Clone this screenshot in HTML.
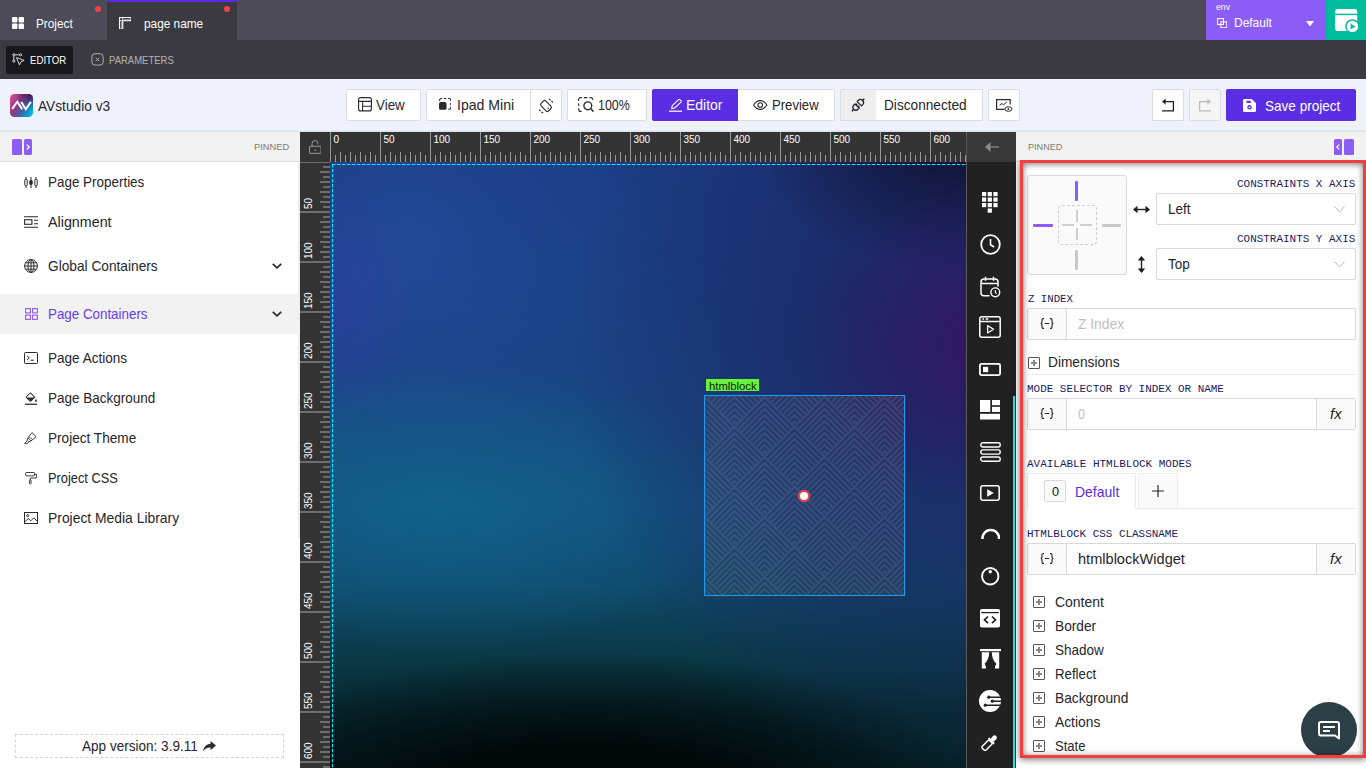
<!DOCTYPE html>
<html lang="en">
<head>
<meta charset="utf-8">
<title>AVstudio v3</title>
<style>
*{box-sizing:border-box;margin:0;padding:0}
html,body{width:1366px;height:768px;overflow:hidden;background:#fff;font-family:"Liberation Sans",sans-serif;color:#222}
.abs{position:absolute}
#app{position:relative;width:1366px;height:768px;overflow:hidden}
/* top bars */
#bar1{left:0;top:0;width:1366px;height:40px;background:#4d4b57}
#bar2{left:0;top:40px;width:1366px;height:39px;background:#3b3a40}
.tab{top:0;height:40px;color:#fff;font-size:13px;line-height:44px;white-space:nowrap}
.dot{width:6px;height:6px;border-radius:50%;background:#f5404a}
#toolbar{left:0;top:79px;width:1366px;height:53px;background:#f0f2fb;border-bottom:1px solid #dce1ec;box-shadow:inset 0 -1px 0 #e7ebf4}
.btn{top:90px;height:31px;background:#fff;border:1px solid #dcdde3;border-radius:2px;font-size:15px;line-height:29px;color:#26262b;white-space:nowrap}
.btn.p{background:#5a2be2;border-color:#5a2be2;color:#fff}
/* left panel */
#lhead{left:0;top:132px;width:300px;height:30px;background:#f2f2f2;border-bottom:1px solid #dedede}
.pinned{font-size:10px;color:#777;letter-spacing:.2px}
.mi{left:0;width:297px;height:40px;font-size:15px;color:#26262b;line-height:40px}
.mi span{position:absolute;left:48px;top:0;white-space:nowrap}
.mi svg{position:absolute}
/* right panel */
#rhead{left:1016px;top:132px;width:350px;height:30px;background:#f2f2f2;border-bottom:1px solid #dedede}
.lab{font-family:"Liberation Mono",monospace;font-size:10px;color:#1c1a5e;letter-spacing:.55px;white-space:nowrap;line-height:12px}
.inp{background:#fff;border:1px solid #d9d9d9;border-radius:2px;height:32px;font-size:15px;line-height:30px;color:#26262b}
.add{background:#fafafa;border:1px solid #d9d9d9;height:32px}
.sec{font-size:15px;color:#26262b;white-space:nowrap;line-height:18px}
.plus{width:12px;height:12px;border:1px solid #555;border-radius:1px;background:#fff}
.plus:before{content:"";position:absolute;left:2px;top:4px;width:6px;height:2px;background:#888}
.plus:after{content:"";position:absolute;left:4px;top:2px;width:2px;height:6px;background:#888}
</style>
</head>
<body>
<div id="app">
<div class="abs" id="bar1"></div>
<div class="abs" id="bar2"></div>
<!-- Project tab -->
<div class="abs tab" style="left:0;width:107px">
  <svg class="abs" style="left:12px;top:17px" width="12" height="12" viewBox="0 0 12 12"><rect x="0" y="0" width="5.4" height="5.4" rx="1" fill="#fff"/><rect x="6.6" y="0" width="5.4" height="5.4" rx="1" fill="#fff"/><rect x="0" y="6.6" width="5.4" height="5.4" rx="1" fill="#fff"/><rect x="6.6" y="6.6" width="5.4" height="5.4" rx="1" fill="#fff"/></svg>
  <div class="abs" style='left:36.4px;top:17px;font-size:12px;line-height:14px;color:#fff;white-space:nowrap;transform-origin:0 50%;transform:scaleX(0.9824);'>Project</div>
  <div class="abs dot" style="left:94.5px;top:5.5px"></div>
</div>
<!-- page name tab -->
<div class="abs tab" style="left:107px;width:130px;background:#3b3a40;border-top:2px solid #5a2be2;line-height:40px">
  <svg class="abs" style="left:11.800px;top:14.800px" width="12.500" height="12.500" viewBox="0 0 12.500 12.500" fill="none" stroke="#fff" stroke-width="1.100"><path d="M0.550 0.550h11.400v3.200H3.750v8.200H0.550z"/><path d="M3.750 0.550v3.200h-3.200M6 2v1.750M8 2v1.750M10 2v1.750M2 6h1.750M2 8h1.750M2 10h1.750" stroke-width="0.900"/></svg>
  <div class="abs" style='left:36.8px;top:15px;font-size:12px;line-height:14px;color:#fff;white-space:nowrap;transform-origin:0 50%;transform:scaleX(0.9859);'>page name</div>
  <div class="abs dot" style="left:117.4px;top:3.5px"></div>
</div>
<!-- env -->
<div class="abs" style="left:1206px;top:0;width:120px;height:40px;background:#8b5cf6"></div>
<div class="abs" style='left:1215.9px;top:1px;font-size:9.5px;line-height:11px;color:#fff;white-space:nowrap;transform-origin:0 50%;transform:scaleX(0.9134);'>env</div>
<svg class="abs" style="left:1217px;top:17.500px" width="10.300" height="10.300" viewBox="0 0 11 11" fill="none" stroke="#fff" stroke-width="1.100"><rect x="0.6" y="0.6" width="6.3" height="6.3"/><rect x="4.1" y="4.1" width="6.3" height="6.3"/></svg>
<div class="abs" style='left:1233.6px;top:16px;font-size:12px;line-height:14px;color:#fff;white-space:nowrap;transform-origin:0 50%;transform:scaleX(0.9965);'>Default</div>
<svg class="abs" style="left:1306px;top:20.500px" width="8" height="5.500" viewBox="0 0 8 5.500"><path d="M0 0h8L4 5.500z" fill="#fff"/></svg>
<div class="abs" style="left:1326px;top:0;width:40px;height:40px;background:#02bc9e"></div>
<svg class="abs" style="left:1335px;top:9px" width="25" height="25" viewBox="0 0 25 25"><rect x="0" y="0" width="22.200" height="22" rx="2.800" fill="#fff"/><path d="M0 5.400h22.200" stroke="#02bc9e" stroke-width="1.500"/><circle cx="17.400" cy="17.400" r="7.200" fill="#02bc9e"/><circle cx="17.400" cy="17.400" r="5.700" fill="#fff"/><path d="M15.600 14.400l4.800 3-4.800 3z" fill="#02bc9e"/></svg>
<!-- bar2 -->
<div class="abs" style="left:6px;top:46px;width:67px;height:28px;background:#19181c;border-radius:2px"></div>
<svg class="abs" style="left:11.800px;top:52.500px" width="13.500" height="13.500" viewBox="0 0 15 15" fill="none" stroke="#e8e8e8" stroke-width="1"><circle cx="2" cy="2" r="1.2"/><circle cx="9.5" cy="2" r="1.2"/><circle cx="2" cy="9" r="1.2"/><path d="M3.2 2h5.1M2 3.2v4.6"/><path d="M5 5l8.5 3.2-3.6 1.6-1.6 3.6z" fill="#19181c"/></svg>
<div class="abs" style='left:29.5px;top:54px;font-size:11px;line-height:13px;color:#fff;white-space:nowrap;transform-origin:0 50%;transform:scaleX(0.8753);'>EDITOR</div>
<svg class="abs" style="left:91px;top:53.200px" width="13" height="12.800" viewBox="0 0 14 14" fill="none" stroke="#b9b9bd" stroke-width="1"><rect x="0.8" y="0.8" width="12.4" height="12.4" rx="3.5"/><path d="M5 5l4 4M9 5l-4 4"/></svg>
<div class="abs" style='left:108.8px;top:54px;font-size:11px;line-height:13px;color:#b5b3b2;white-space:nowrap;transform-origin:0 50%;transform:scaleX(0.8642);'>PARAMETERS</div>
<div class="abs" id="toolbar"></div>
<!-- logo -->
<svg class="abs" style="left:10px;top:94px" width="23" height="23" viewBox="0 0 23 23"><defs><linearGradient id="lg" x1="0" y1="0.250" x2="1" y2="0.800"><stop offset="0" stop-color="#cc4a95"/><stop offset=".3" stop-color="#97387f"/><stop offset=".58" stop-color="#4c5d9c"/><stop offset=".8" stop-color="#1590c4"/><stop offset="1" stop-color="#00bde8"/></linearGradient><radialGradient id="rg" cx="0.950" cy="0" r="0.650"><stop offset="0" stop-color="#4a0f5c"/><stop offset="1" stop-color="#4a0f5c" stop-opacity="0"/></radialGradient></defs><rect width="23" height="23" rx="4.500" fill="url(#lg)"/><rect width="23" height="23" rx="4.500" fill="url(#rg)"/><path d="M2.200 14.800L7.300 7.700L12.200 15.200M11.300 7.900L15.800 15.200L20.900 7.900" fill="none" stroke="#fff" stroke-width="2" stroke-linejoin="miter"/></svg>
<div class="abs" style='left:38.3px;top:98px;font-size:14px;line-height:17px;color:#26262b;white-space:nowrap;transform-origin:0 50%;transform:scaleX(0.9787);'>AVstudio v3</div>
<!-- View -->
<div class="abs btn" style="left:346px;width:75px;top:89px;height:32px"></div>
<svg class="abs" style="left:358px;top:97px" width="14" height="15" viewBox="0 0 14 15" fill="none" stroke="#2b2b30" stroke-width="1.1"><rect x="0.6" y="0.6" width="12.8" height="13.3" rx="2"/><path d="M0.6 4.4h12.8M4.6 4.4v9.5M4.6 9.2h8.8"/></svg>
<div class="abs" style='left:376.2px;top:97px;font-size:14.5px;line-height:17px;color:#26262b;white-space:nowrap;transform-origin:0 50%;transform:scaleX(0.9207);'>View</div>
<!-- Ipad Mini -->
<div class="abs btn" style="left:426px;width:136px;top:89px;height:32px"></div>
<div class="abs" style="left:530px;top:90px;width:1px;height:30px;background:#dcdde3"></div>
<svg class="abs" style="left:438.600px;top:98.200px" width="12.300" height="11.800" viewBox="0 0 13 12.5" fill="none" stroke="#2b2b30" stroke-width="1.1"><path d="M0.6 3.2V2.2a1.6 1.6 0 0 1 1.6-1.6h1.2M5.2 0.6h2.6M9.6 0.6h1.2a1.6 1.6 0 0 1 1.6 1.6v1.2M12.4 5.2v2.4M12.4 9.2v1.1a1.6 1.6 0 0 1-1.6 1.6H9.8"/><rect x="0" y="4.3" width="8" height="8.2" rx="2" fill="#2b2b30" stroke="none"/></svg>
<div class="abs" style='left:457.1px;top:97px;font-size:14.5px;line-height:17px;color:#26262b;white-space:nowrap;transform-origin:0 50%;transform:scaleX(0.9704);'>Ipad Mini</div>
<svg class="abs" style="left:538px;top:97.500px" width="16" height="16" viewBox="0 0 16 16" fill="none" stroke="#2b2b30" stroke-width="1.150"><rect x="4.600" y="2.700" width="6.800" height="10.600" rx="1.800" transform="rotate(-45 8 8)"/><circle cx="10.300" cy="10.300" r="0.750" fill="#2b2b30" stroke="none"/><path d="M10.800 1A7.400 7.400 0 0 1 15 5.200M5.200 15A7.400 7.400 0 0 1 1 10.800" stroke-dasharray="2 1.300"/></svg>
<!-- 100% -->
<div class="abs btn" style="left:567px;width:80px;top:89px;height:32px"></div>
<svg class="abs" style="left:577.5px;top:96.5px" width="16.5" height="15.5" viewBox="0 0 16.5 15.5" fill="none" stroke="#2b2b30" stroke-width="1.2"><path d="M0.7 4V2.6a2 2 0 0 1 2-2h1.2M6 0.6h3.4M11.4 0.6h1.4a2 2 0 0 1 2 2V3M0.7 6.2v3M0.7 11.2v1.2a2 2 0 0 0 2 2H3.6" stroke-width="1.1"/><circle cx="9.8" cy="8.8" r="3.9" stroke-width="1.4"/><path d="M12.7 11.8l2.8 2.8" stroke-width="1.5"/></svg>
<div class="abs" style='left:598.3px;top:97px;font-size:14.5px;line-height:17px;color:#26262b;white-space:nowrap;transform-origin:0 50%;transform:scaleX(0.8573);'>100%</div>
<!-- Editor / Preview -->
<div class="abs btn" style="left:737px;width:98px;top:89px;height:32px;border-left:none;border-radius:0 2px 2px 0"></div>
<div class="abs" style="left:652px;top:89px;width:86px;height:32px;background:#5b2ee5;border-radius:2px 0 0 2px"></div>
<svg class="abs" style="left:668.5px;top:99px" width="13.5" height="13" viewBox="0 0 13.5 13" fill="none" stroke="#fff" stroke-width="1.1"><path d="M0 12.2h13.2" stroke-width="1.2"/><path d="M2.6 9.6l0.7-3L9.6 0.7a0.9 0.9 0 0 1 1.2 0l1.2 1.2a0.9 0.9 0 0 1 0 1.2L5.7 9z" stroke-linejoin="round"/></svg>
<div class="abs" style='left:686.1px;top:97px;font-size:14.5px;line-height:17px;color:#fff;white-space:nowrap;transform-origin:0 50%;transform:scaleX(0.9607);'>Editor</div>
<svg class="abs" style="left:753px;top:100px" width="14.5" height="10" viewBox="0 0 14.5 10" fill="none" stroke="#2b2b30" stroke-width="1.1"><path d="M0.6 5C2.2 2.2 4.5 0.6 7.25 0.6S12.3 2.2 13.9 5C12.3 7.8 10 9.4 7.25 9.4S2.2 7.8 0.6 5z"/><circle cx="7.25" cy="5" r="2.3"/></svg>
<div class="abs" style='left:771.8px;top:97px;font-size:14.5px;line-height:17px;color:#26262b;white-space:nowrap;transform-origin:0 50%;transform:scaleX(0.9035);'>Preview</div>
<!-- Disconnected -->
<div class="abs btn" style="left:840px;width:143px;top:89px;height:32px"></div>
<div class="abs" style="left:841px;top:90px;width:35px;height:30px;background:#eeeeee"></div>
<svg class="abs" style="left:851px;top:98px" width="14" height="14" viewBox="0 0 14 14" fill="none" stroke="#1e1e22" stroke-width="1.250"><g transform="translate(7.100 7) rotate(-45)"><path d="M-1.400 -2.900H-3.200A2.900 2.900 0 0 0 -3.200 2.900H-1.400z"/><path d="M-1.400 -1.400H0.200M-1.400 1.400H0.200M-6.100 0H-8.800" stroke-width="1.400"/><path d="M1.700 -3.100H3.200A3.100 3.100 0 0 1 3.200 3.100H1.700z"/><path d="M6.300 0H8.800" stroke-width="1.400"/></g></svg>
<div class="abs" style='left:884.2px;top:97px;font-size:14.5px;line-height:17px;color:#26262b;white-space:nowrap;transform-origin:0 50%;transform:scaleX(0.9413);'>Disconnected</div>
<div class="abs btn" style="left:988px;width:32px;top:89px;height:32px"></div>
<svg class="abs" style="left:996px;top:98.5px" width="17" height="13" viewBox="0 0 17 13" fill="none" stroke="#2b2b30" stroke-width="1.2"><path d="M8.5 10.4H0.6V0.6h13.6v5"/><path d="M3.6 6.2l2.4-1.6 1.6 1.2 3.2-2.8" stroke-width="1"/><ellipse cx="12.4" cy="10" rx="3.6" ry="2.3" stroke-width="1"/><circle cx="12.4" cy="10" r="0.9" fill="#2b2b30" stroke="none"/></svg>
<!-- undo / redo / save -->
<div class="abs btn" style="left:1152px;width:32px;top:89px;height:32px"></div>
<svg class="abs" style="left:1161px;top:98px" width="14" height="14" viewBox="0 0 14 14" fill="none" stroke="#1e1e22" stroke-width="1.3"><path d="M1.4 3.6h11v9.2H1"/><path d="M4.6 0.4L1.4 3.6l3.2 3.2" fill="#1e1e22" stroke="none"/></svg>
<div class="abs btn" style="left:1189px;width:32px;top:89px;height:32px;background:#f5f5f5"></div>
<svg class="abs" style="left:1198px;top:98px" width="14" height="14" viewBox="0 0 14 14" fill="none" stroke="#bcbcbc" stroke-width="1.3"><path d="M12.6 3.6h-11v9.2H13"/><path d="M9.4 0.4l3.2 3.2-3.2 3.2" fill="#bcbcbc" stroke="none"/></svg>
<div class="abs" style="left:1226px;top:89px;width:130px;height:32px;background:#5b2ee5;border-radius:2px"></div>
<svg class="abs" style="left:1242.5px;top:98.5px" width="13" height="13" viewBox="0 0 13 13"><path d="M1.5 0h7.3L13 4.2v7.3a1.5 1.5 0 0 1-1.5 1.5h-10A1.5 1.5 0 0 1 0 11.500V1.5A1.500 1.500 0 0 1 1.500 0z" fill="#fff"/><rect x="3.500" y="1.800" width="4.300" height="2.200" fill="#5b2ee5"/><circle cx="6.500" cy="8.300" r="2.200" fill="#5b2ee5"/><circle cx="6.500" cy="8.300" r="0.900" fill="#fff"/></svg>
<div class="abs" style='left:1264.9px;top:98px;font-size:14.5px;line-height:17px;color:#fff;white-space:nowrap;transform-origin:0 50%;transform:scaleX(0.9341);'>Save project</div>
<div class="abs" id="lhead"></div>
<div class="abs" style="left:0;top:162px;width:300px;height:606px;background:#fff"></div>
<div class="abs" style="left:298px;top:162px;width:2px;height:376px;background:#ededf1"></div>
<svg class="abs" style="left:12px;top:139px" width="20" height="16" viewBox="0 0 20 16"><rect x="0" y="0" width="10" height="16" rx="1.5" fill="#8b5cf6"/><rect x="12" y="0" width="8" height="16" rx="1.5" fill="#8b5cf6"/><path d="M14.8 5.6l2.4 2.400-2.400 2.400" fill="none" stroke="#fff" stroke-width="1.300"/></svg>
<div class="abs" style='left:254.1px;top:141px;font-size:9.5px;line-height:11px;color:#7c7c7c;white-space:nowrap;transform-origin:0 50%;transform:scaleX(0.9775);'>PINNED</div>
<!-- menu -->
<div class="abs" style="left:0;top:294px;width:299px;height:40px;background:#f2f2f2"></div>
<svg class="abs" style="left:24px;top:177px" width="14" height="11" viewBox="0 0 14 11" fill="none" stroke="#2b2b30" stroke-width="1"><path d="M2 0v2.500M2 8.500v2.500M7 0v3.500M7 7.500v3.500M12 0v2.500M12 8.500v2.500"/><rect x="0.800" y="2.500" width="2.400" height="6" rx="0.600"/><rect x="5.800" y="3.500" width="2.400" height="4" rx="0.600" fill="#2b2b30"/><rect x="10.800" y="2.500" width="2.400" height="6" rx="0.600"/></svg>
<div class="abs" style='left:48.2px;top:174px;font-size:14.5px;line-height:17px;color:#26262b;white-space:nowrap;transform-origin:0 50%;transform:scaleX(0.9261);'>Page Properties</div>
<svg class="abs" style="left:24px;top:216px" width="14" height="12" viewBox="0 0 14 12" fill="none" stroke="#2b2b30" stroke-width="1.100"><path d="M0 0.800h14M0 11.200h14M10 4.200h4M10 7.800h4"/><rect x="0.600" y="3.700" width="7.300" height="4.600"/></svg>
<div class="abs" style='left:48.2px;top:214px;font-size:14.5px;line-height:17px;color:#26262b;white-space:nowrap;transform-origin:0 50%;transform:scaleX(0.9863);'>Alignment</div>
<svg class="abs" style="left:24px;top:259px" width="14" height="14" viewBox="0 0 14 14" fill="none" stroke="#2b2b30" stroke-width="1"><circle cx="7" cy="7" r="6.400"/><ellipse cx="7" cy="7" rx="3" ry="6.400"/><path d="M7 0.600v12.800M0.600 7h12.800M1.500 3.800h11M1.500 10.200h11"/></svg>
<div class="abs" style='left:48.2px;top:258px;font-size:14.5px;line-height:17px;color:#26262b;white-space:nowrap;transform-origin:0 50%;transform:scaleX(0.9451);'>Global Containers</div>
<svg class="abs" style="left:272px;top:262.500px" width="10" height="6" viewBox="0 0 10 6" fill="none" stroke="#2b2b30" stroke-width="1.800"><path d="M0.800 0.800l4.200 4 4.200-4"/></svg>
<svg class="abs" style="left:25px;top:308px" width="13" height="12" viewBox="0 0 13 12" fill="none" stroke="#8b5cf6" stroke-width="1.100"><rect x="0.600" y="0.600" width="4.800" height="4.300"/><rect x="7.600" y="0.600" width="4.800" height="4.300"/><rect x="0.600" y="7.100" width="4.800" height="4.300"/><rect x="7.600" y="7.100" width="4.800" height="4.300"/></svg>
<div class="abs" style='left:48.2px;top:306px;font-size:14.5px;line-height:17px;color:#6a3de8;white-space:nowrap;transform-origin:0 50%;transform:scaleX(0.9212);'>Page Containers</div>
<svg class="abs" style="left:272px;top:310.500px" width="10" height="6" viewBox="0 0 10 6" fill="none" stroke="#2b2b30" stroke-width="1.800"><path d="M0.800 0.800l4.200 4 4.200-4"/></svg>
<svg class="abs" style="left:24px;top:352px" width="14" height="12" viewBox="0 0 14 12" fill="none" stroke="#2b2b30" stroke-width="1"><rect x="0.500" y="0.500" width="13" height="11" rx="0.800"/><path d="M3 3.800l2.400 2-2.400 2M6.500 8.200h3.500"/></svg>
<div class="abs" style='left:48.2px;top:350px;font-size:14.5px;line-height:17px;color:#26262b;white-space:nowrap;transform-origin:0 50%;transform:scaleX(0.9344);'>Page Actions</div>
<svg class="abs" style="left:24.500px;top:391.500px" width="12.800" height="13" viewBox="0 0 14 14"><path d="M5.600 0.600l5 5-4 4a1 1 0 0 1-1.400 0l-3.400-3.400a1 1 0 0 1 0-1.400l3.400-3.400" fill="none" stroke="#2b2b30" stroke-width="1.100"/><path d="M1.700 6h8.600l-4.200 3.800z" fill="#2b2b30"/><path d="M12 7.600c0.700 1 1 1.500 1 2a1 1 0 0 1-2 0c0-0.500 0.300-1 1-2z" fill="#2b2b30"/><path d="M0 13.300h14" stroke="#2b2b30" stroke-width="1.400"/></svg>
<div class="abs" style='left:48.2px;top:390px;font-size:14.5px;line-height:17px;color:#26262b;white-space:nowrap;transform-origin:0 50%;transform:scaleX(0.9299);'>Page Background</div>
<svg class="abs" style="left:24.200px;top:432px" width="13" height="12.500" viewBox="0 0 14 14" fill="none" stroke="#2b2b30" stroke-width="1"><path d="M8.600 0.700l4.700 4.700-5.800 4.600-3.400-3.400z"/><path d="M5.600 5.200l3.300 3.300M4.100 6.600l-1 2.800 1.500 1.500 2.900-0.900M3.400 9.800l-3 3h3.400l1.200-1.400"/></svg>
<div class="abs" style='left:48.2px;top:430px;font-size:14.5px;line-height:17px;color:#26262b;white-space:nowrap;transform-origin:0 50%;transform:scaleX(0.9380);'>Project Theme</div>
<svg class="abs" style="left:24.500px;top:472.300px" width="12.200" height="12.600" viewBox="0 0 14 15" fill="none" stroke="#2b2b30" stroke-width="1.100"><rect x="0.600" y="0.600" width="10.400" height="4" rx="0.800"/><path d="M11 2.600h2.300v4.600H6v2.300"/><rect x="5" y="9.500" width="2" height="4.800" rx="0.800"/></svg>
<div class="abs" style='left:48.2px;top:470px;font-size:14.5px;line-height:17px;color:#26262b;white-space:nowrap;transform-origin:0 50%;transform:scaleX(0.8850);'>Project CSS</div>
<svg class="abs" style="left:24px;top:512px" width="14" height="12" viewBox="0 0 14 12" fill="none" stroke="#2b2b30" stroke-width="1"><rect x="0.500" y="0.500" width="13" height="11"/><circle cx="3.700" cy="3.600" r="1" /><path d="M0.500 10l3.800-3.500 2.500 2.300 3-3 3.700 3.700"/></svg>
<div class="abs" style='left:48.2px;top:510px;font-size:14.5px;line-height:17px;color:#26262b;white-space:nowrap;transform-origin:0 50%;transform:scaleX(0.9569);'>Project Media Library</div>
<!-- app version -->
<div class="abs" style="left:15px;top:734px;width:269px;height:24px;border:1px dashed #d4d4d4"></div>
<div class="abs" style='left:82.1px;top:738px;font-size:14.5px;line-height:17px;color:#26262b;white-space:nowrap;transform-origin:0 50%;transform:scaleX(0.9348);'>App version: 3.9.11</div>
<svg class="abs" style="left:203px;top:740.500px" width="13" height="11" viewBox="0 0 13 11"><path d="M7.600 0l5.400 4.600-5.400 4.600V6.500C3.800 6.500 1.600 7.800 0 10.600 0.500 6.200 3 3.200 7.600 2.700z" fill="#2b2b30"/></svg>
<div class="abs" id="canvas" style="left:330px;top:162px;width:636px;height:606px;overflow:hidden;background:radial-gradient(ellipse 30% 26% at 104% 30%, rgba(52,22,100,.9) 0%, rgba(52,22,100,0) 100%),radial-gradient(ellipse 34% 22% at 100% -4%, rgba(16,14,44,.95) 0%, rgba(16,14,44,0) 100%),radial-gradient(ellipse 62% 72% at 100% 30%, rgba(28,32,92,.9) 0%, rgba(28,34,96,.62) 45%, rgba(28,36,100,0) 100%),radial-gradient(ellipse 68% 27% at 40% 108%, rgba(1,6,7,1) 0%, rgba(1,6,7,.9) 45%, rgba(1,6,7,0) 100%),radial-gradient(ellipse 48% 24% at 17% 57%, rgba(16,100,140,.85) 0%, rgba(16,100,140,0) 100%),radial-gradient(ellipse 14% 20% at 0% 24%, rgba(50,60,165,.5) 0%, rgba(50,60,165,0) 100%),radial-gradient(ellipse 40% 35% at 12% 14%, rgba(36,74,156,.8) 0%, rgba(36,74,156,0) 100%),linear-gradient(to bottom, #1b3d82 0%, #1a4582 35%, #164e7e 56%, #10496a 70%, #0a3a48 81%, #062a30 91%, #052429 100%)"></div>
<svg class="abs" style="left:330px;top:162px" width="637" height="606" viewBox="0 0 637 606" fill="none" stroke="#00eeff" stroke-width="1" stroke-dasharray="3.400 1.600"><path d="M2 2.500H637M2.500 2V606"/></svg>
<svg class="abs" style="left:703.6px;top:395px" width="201" height="201" viewBox="0 0 201 201"><defs><clipPath id="dm"><path d="M30 0L60 30 30 60 0 30z"/></clipPath><g id="chev" clip-path="url(#dm)" fill="none" stroke="#fff" stroke-opacity=".125" stroke-width="2.100">
<path d="M-10 41.5L30 1.5L70 41.5"/>
<path d="M-10 47.5L30 7.5L70 47.5"/>
<path d="M-10 53.5L30 13.5L70 53.5"/>
<path d="M-10 59.5L30 19.5L70 59.5"/>
<path d="M-10 65.5L30 25.5L70 65.5"/>
<path d="M-10 71.5L30 31.5L70 71.5"/>
<path d="M-10 77.5L30 37.5L70 77.5"/>
<path d="M-10 83.5L30 43.5L70 83.5"/>
<path d="M-10 89.5L30 49.5L70 89.5"/>
<path d="M-10 95.5L30 55.5L70 95.5"/>
<path d="M-10 101.5L30 61.5L70 101.5"/>
</g><pattern id="pt" width="60" height="60" patternUnits="userSpaceOnUse" x="30.500" y="0.500"><use href="#chev"/><use href="#chev" x="-30" y="-30"/><use href="#chev" x="30" y="-30"/><use href="#chev" x="-30" y="30"/><use href="#chev" x="30" y="30"/></pattern></defs><rect x="0.500" y="0.500" width="200" height="200" fill="rgba(70,70,90,.16)"/><rect x="0.500" y="0.500" width="200" height="200" fill="url(#pt)" stroke="#1b9df0" stroke-width="1"/></svg>
<div class="abs" style="left:706px;top:379px;width:53px;height:12px;background:#68f23a"></div>
<div class="abs" style='left:708.7px;top:380px;font-size:10.5px;line-height:13px;color:#0a1a05;white-space:nowrap;transform-origin:0 50%;transform:scaleX(1.0731);'>htmlblock</div>
<div class="abs" style="left:798px;top:489.500px;width:12px;height:12px;border-radius:50%;background:#fff;border:2.500px solid #f0424d;box-shadow:0 0 1px #f0424d"></div>
<div class="abs" style="left:300px;top:132px;width:667px;height:30px;background:#333"></div>
<div class="abs" style="left:300px;top:162px;width:30px;height:606px;background:#333"></div>
<div class="abs" style="left:330px;top:152px;width:637px;height:10px;background:repeating-linear-gradient(to right,#999 0,#999 1px,transparent 1px,transparent 10px)"></div>
<div class="abs" style="left:335px;top:155px;width:632px;height:7px;background:repeating-linear-gradient(to right,#999 0,#999 1px,transparent 1px,transparent 10px)"></div>
<div class="abs" style="left:330px;top:132px;width:637px;height:30px;background:repeating-linear-gradient(to right,#999 0,#999 1px,transparent 1px,transparent 50px)"></div>
<div class="abs" style="left:320px;top:171px;width:10px;height:597px;background:repeating-linear-gradient(to bottom,#6e6e6e 0,#6e6e6e 2px,transparent 2px,transparent 10px)"></div>
<div class="abs" style="left:323px;top:166px;width:7px;height:602px;background:repeating-linear-gradient(to bottom,#6e6e6e 0,#6e6e6e 2px,transparent 2px,transparent 10px)"></div>
<div class="abs" style="left:300px;top:211px;width:30px;height:557px;background:repeating-linear-gradient(to bottom,#6e6e6e 0,#6e6e6e 2px,transparent 2px,transparent 50px)"></div><div class="abs" style="left:300px;top:162px;width:30px;height:1px;background:#6e6e6e"></div>
<div class="abs" style="left:333.5px;top:134px;font-size:10px;line-height:12px;color:#fff">0</div>
<div class="abs" style="left:383.5px;top:134px;font-size:10px;line-height:12px;color:#fff">50</div>
<div class="abs" style="left:433.5px;top:134px;font-size:10px;line-height:12px;color:#fff">100</div>
<div class="abs" style="left:483.5px;top:134px;font-size:10px;line-height:12px;color:#fff">150</div>
<div class="abs" style="left:533.5px;top:134px;font-size:10px;line-height:12px;color:#fff">200</div>
<div class="abs" style="left:583.5px;top:134px;font-size:10px;line-height:12px;color:#fff">250</div>
<div class="abs" style="left:633.5px;top:134px;font-size:10px;line-height:12px;color:#fff">300</div>
<div class="abs" style="left:683.5px;top:134px;font-size:10px;line-height:12px;color:#fff">350</div>
<div class="abs" style="left:733.5px;top:134px;font-size:10px;line-height:12px;color:#fff">400</div>
<div class="abs" style="left:783.5px;top:134px;font-size:10px;line-height:12px;color:#fff">450</div>
<div class="abs" style="left:833.5px;top:134px;font-size:10px;line-height:12px;color:#fff">500</div>
<div class="abs" style="left:883.5px;top:134px;font-size:10px;line-height:12px;color:#fff">550</div>
<div class="abs" style="left:933.5px;top:134px;font-size:10px;line-height:12px;color:#fff">600</div>
<div class="abs" style="left:303px;top:209px;font-size:10px;line-height:12px;color:#fff;transform-origin:0 0;transform:rotate(-90deg);white-space:nowrap">50</div>
<div class="abs" style="left:303px;top:259px;font-size:10px;line-height:12px;color:#fff;transform-origin:0 0;transform:rotate(-90deg);white-space:nowrap">100</div>
<div class="abs" style="left:303px;top:309px;font-size:10px;line-height:12px;color:#fff;transform-origin:0 0;transform:rotate(-90deg);white-space:nowrap">150</div>
<div class="abs" style="left:303px;top:359px;font-size:10px;line-height:12px;color:#fff;transform-origin:0 0;transform:rotate(-90deg);white-space:nowrap">200</div>
<div class="abs" style="left:303px;top:409px;font-size:10px;line-height:12px;color:#fff;transform-origin:0 0;transform:rotate(-90deg);white-space:nowrap">250</div>
<div class="abs" style="left:303px;top:459px;font-size:10px;line-height:12px;color:#fff;transform-origin:0 0;transform:rotate(-90deg);white-space:nowrap">300</div>
<div class="abs" style="left:303px;top:509px;font-size:10px;line-height:12px;color:#fff;transform-origin:0 0;transform:rotate(-90deg);white-space:nowrap">350</div>
<div class="abs" style="left:303px;top:559px;font-size:10px;line-height:12px;color:#fff;transform-origin:0 0;transform:rotate(-90deg);white-space:nowrap">400</div>
<div class="abs" style="left:303px;top:609px;font-size:10px;line-height:12px;color:#fff;transform-origin:0 0;transform:rotate(-90deg);white-space:nowrap">450</div>
<div class="abs" style="left:303px;top:659px;font-size:10px;line-height:12px;color:#fff;transform-origin:0 0;transform:rotate(-90deg);white-space:nowrap">500</div>
<div class="abs" style="left:303px;top:709px;font-size:10px;line-height:12px;color:#fff;transform-origin:0 0;transform:rotate(-90deg);white-space:nowrap">550</div>
<div class="abs" style="left:303px;top:759px;font-size:10px;line-height:12px;color:#fff;transform-origin:0 0;transform:rotate(-90deg);white-space:nowrap">600</div>
<svg class="abs" style="left:308.600px;top:140.200px" width="12.600" height="14.200" viewBox="0 0 14 15" fill="none" stroke="#9a9a9a" stroke-width="1.100"><rect x="0.600" y="6.600" width="12.800" height="7.800" rx="0.500"/><path d="M3.400 6.600V3.600a3.300 3.300 0 0 1 6.600 0V4.400"/><path d="M6.200 10.200h1.600v1.400h-1.600z" fill="#9a9a9a" stroke="none"/></svg>
<div class="abs" style="left:966px;top:162px;width:50px;height:606px;background:#212121;border-left:1px solid #5a5a5a"></div>
<div class="abs" style="left:966px;top:132px;width:50px;height:30px;background:#383838;border-left:1px solid #5a5a5a"></div>
<div class="abs" style="left:1013px;top:396px;width:2px;height:372px;background:#1ae8e8"></div>
<svg class="abs" style="left:985px;top:142px" width="14" height="10" viewBox="0 0 14 10"><path d="M0 5L5.500 0V10z" fill="#8a8a8a"/><path d="M5 5h9" stroke="#8a8a8a" stroke-width="1.300"/></svg>
<!-- keypad -->
<svg class="abs" style="left:982px;top:192px" width="16" height="21" viewBox="0 0 16 21" fill="#fff"><rect x="0" y="0" width="4.200" height="4.200"/><rect x="5.700" y="0" width="4.200" height="4.200"/><rect x="11.400" y="0" width="4.200" height="4.200"/><rect x="0" y="5.500" width="4.200" height="4.200"/><rect x="5.700" y="5.500" width="4.200" height="4.200"/><rect x="11.400" y="5.500" width="4.200" height="4.200"/><rect x="0" y="11" width="4.200" height="4.200"/><rect x="5.700" y="11" width="4.200" height="4.200"/><rect x="11.400" y="11" width="4.200" height="4.200"/><rect x="5.700" y="16.500" width="4.200" height="4.200"/></svg>
<!-- clock -->
<svg class="abs" style="left:979.500px;top:233.500px" width="21" height="21" viewBox="0 0 21 21" fill="none" stroke="#fff" stroke-width="1.800"><circle cx="10.500" cy="10.500" r="9.300"/><path d="M10.500 5v5.800l3.600 2.200" stroke-width="1.600"/></svg>
<!-- calendar clock -->
<svg class="abs" style="left:980px;top:275.500px" width="21" height="22" viewBox="0 0 21 22" fill="none" stroke="#fff" stroke-width="1.500"><path d="M9.500 19.700H4a3 3 0 0 1-3-3V6a3 3 0 0 1 3-3h11a3 3 0 0 1 3 3v4.500"/><path d="M1 7.600h17M5.500 0.800v4M13.500 0.800v4"/><circle cx="15.300" cy="16.300" r="4.400" stroke-width="1.400"/><path d="M15.300 14v2.500l1.500 1" stroke-width="1.100"/></svg>
<!-- window play -->
<svg class="abs" style="left:978.500px;top:316px" width="22" height="22" viewBox="0 0 22 22" fill="none" stroke="#fff" stroke-width="1.500"><rect x="0.800" y="0.800" width="20.400" height="20.400" rx="2"/><path d="M0.800 5.400h20.400M3.400 3.100h1.600M6.600 3.100h2.600" /><path d="M8.600 9.600l6 3.700-6 3.700z" stroke-linejoin="round" stroke-width="1.300"/></svg>
<!-- toggle -->
<svg class="abs" style="left:978.500px;top:362.500px" width="22" height="13" viewBox="0 0 22 13"><rect x="0.900" y="0.900" width="20.200" height="11.200" rx="1.500" fill="none" stroke="#fff" stroke-width="1.800"/><rect x="4" y="3.800" width="5.200" height="5.400" fill="#fff"/></svg>
<!-- layout -->
<svg class="abs" style="left:980px;top:400px" width="20" height="19.500" viewBox="0 0 20 19.500" fill="#fff"><rect x="0" y="0" width="10.300" height="12"/><rect x="12" y="0" width="8" height="5.200"/><rect x="12" y="6.800" width="8" height="5.200"/><rect x="0" y="13.800" width="20" height="5.700"/></svg>
<!-- list -->
<svg class="abs" style="left:979.500px;top:442px" width="21" height="20" viewBox="0 0 21 20" fill="none" stroke="#fff" stroke-width="1.400"><rect x="0.800" y="0.800" width="19.400" height="4.200" rx="2"/><rect x="0.800" y="7.900" width="19.400" height="4.200" rx="2"/><rect x="0.800" y="15" width="19.400" height="4.200" rx="2"/></svg>
<!-- play box -->
<svg class="abs" style="left:980px;top:485px" width="20" height="16" viewBox="0 0 20 16"><rect x="0.800" y="0.800" width="18.400" height="14.400" rx="2" fill="none" stroke="#fff" stroke-width="1.500"/><path d="M7.200 4.200l6.600 3.800-6.600 3.800z" fill="#fff"/></svg>
<!-- arc -->
<svg class="abs" style="left:980.500px;top:525.500px" width="19.500" height="13.500" viewBox="0 0 19.500 13.500" fill="none" stroke="#fff" stroke-width="2.600"><path d="M1.500 13.200A8.300 8.300 0 1 1 18 13.200"/></svg>
<!-- knob -->
<svg class="abs" style="left:981px;top:567px" width="18.500" height="18.500" viewBox="0 0 18.500 18.500"><circle cx="9.250" cy="9.250" r="8.200" fill="none" stroke="#fff" stroke-width="1.900"/><circle cx="9.250" cy="4.700" r="1.700" fill="#fff"/></svg>
<!-- code window -->
<svg class="abs" style="left:980px;top:609px" width="20" height="18.500" viewBox="0 0 20 18.500"><path d="M1.800 0h16.400a1.800 1.800 0 0 1 1.800 1.800v14.900a1.800 1.800 0 0 1-1.800 1.800H1.800A1.800 1.800 0 0 1 0 16.700V1.800A1.800 1.800 0 0 1 1.800 0z" fill="#fff"/><path d="M1.200 3.600h17.600" stroke="#212121" stroke-width="1.300"/><path d="M8 7.500l-3.500 3.300 3.500 3.300M12 7.500l3.500 3.300-3.500 3.300" fill="none" stroke="#212121" stroke-width="1.700"/></svg>
<!-- curtains -->
<svg class="abs" style="left:979.500px;top:649px" width="21" height="19.500" viewBox="0 0 21 19.500" fill="#fff"><rect x="0" y="0" width="21" height="2.200"/><path d="M1.800 3.200h7.400c0 5-1.600 8.600-4.600 11.500l1.400 3v1.800H1.800z"/><path d="M19.200 3.200h-7.400c0 5 1.600 8.600 4.600 11.500l-1.400 3v1.800h4.200z"/></svg>
<!-- circuit circle -->
<svg class="abs" style="left:978.500px;top:689.500px" width="23" height="22" viewBox="0 0 23 22"><circle cx="11" cy="11" r="11" fill="#fff"/><path d="M10.500 7.200H23M14 11.200H23M7 15.200H23" stroke="#212121" stroke-width="1.500"/><circle cx="9.800" cy="7.200" r="1.600" fill="#212121"/><circle cx="13.300" cy="11.200" r="1.600" fill="#212121"/><circle cx="6.300" cy="15.200" r="1.600" fill="#212121"/><rect x="22" y="0" width="1" height="22" fill="#212121"/></svg>
<!-- eyedropper -->
<svg class="abs" style="left:981px;top:732.500px" width="18" height="18.500" viewBox="0 0 18 18.500"><g transform="translate(9 9.300) rotate(45)"><rect x="-2.700" y="-1" width="5.400" height="10.600" rx="1.400" fill="none" stroke="#fff" stroke-width="1.500"/><rect x="-4" y="-3" width="8" height="2.200" rx="0.500" fill="#fff"/><rect x="-2.300" y="-8.800" width="4.600" height="6.500" rx="2.300" fill="#fff"/></g></svg>
<div class="abs" style="left:1016px;top:162px;width:350px;height:606px;background:#fff"></div>
<div class="abs" id="rhead"></div>
<div class="abs" style='left:1027.5px;top:141px;font-size:9.5px;line-height:11px;color:#7c7c7c;white-space:nowrap;transform-origin:0 50%;transform:scaleX(0.9553);'>PINNED</div>
<svg class="abs" style="left:1334px;top:139px" width="20" height="16" viewBox="0 0 20 16"><rect x="0" y="0" width="8" height="16" rx="1.500" fill="#8b5cf6"/><rect x="10" y="0" width="10" height="16" rx="1.500" fill="#8b5cf6"/><path d="M5.200 5.600l-2.400 2.400 2.400 2.400" fill="none" stroke="#fff" stroke-width="1.300"/></svg>
<!-- constraint box -->
<div class="abs" style="left:1027px;top:175px;width:100px;height:100px;background:#fafafa;border:1px solid #d9d9d9;border-radius:3px"></div>
<div class="abs" style="left:1057.500px;top:205px;width:39.500px;height:39.500px;border:1px dashed #cfcfcf;border-radius:4px"></div>
<div class="abs" style="left:1075px;top:181px;width:3px;height:19.500px;background:#8b5cf6;border-radius:1px"></div>
<div class="abs" style="left:1075px;top:250px;width:3px;height:19.500px;background:#c9c9c9;border-radius:1px"></div>
<div class="abs" style="left:1033px;top:223.500px;width:19.500px;height:3px;background:#8b5cf6;border-radius:1px"></div>
<div class="abs" style="left:1101.500px;top:223.500px;width:19.500px;height:3px;background:#c9c9c9;border-radius:1px"></div>
<div class="abs" style="left:1062px;top:224px;width:12px;height:2px;background:#cfcfcf"></div>
<div class="abs" style="left:1080px;top:224px;width:12px;height:2px;background:#cfcfcf"></div>
<div class="abs" style="left:1076px;top:210px;width:2px;height:12px;background:#cfcfcf"></div>
<div class="abs" style="left:1076px;top:228px;width:2px;height:12px;background:#cfcfcf"></div>
<div class="abs" style='left:1237.4px;top:178px;font-size:10.5px;line-height:13px;color:#1c1a5e;white-space:nowrap;transform-origin:0 50%;transform:scaleX(1.0430);font-family:"Liberation Mono",monospace;'>CONSTRAINTS X AXIS</div>
<svg class="abs" style="left:1133px;top:205px" width="17" height="9" viewBox="0 0 17 9"><path d="M3 4.500h11" stroke="#1e1e22" stroke-width="1.400"/><path d="M0 4.500L4.500 0.800v7.400zM17 4.500L12.500 0.800v7.400z" fill="#1e1e22"/></svg>
<div class="abs inp" style="left:1156px;top:193px;width:200px;height:32px"></div>
<div class="abs" style='left:1167.8px;top:201px;font-size:14.5px;line-height:17px;color:#26262b;white-space:nowrap;transform-origin:0 50%;transform:scaleX(0.9261);'>Left</div>
<svg class="abs" style="left:1334px;top:205.500px" width="11" height="7" viewBox="0 0 11 7" fill="none" stroke="#b8b8b8" stroke-width="1"><path d="M0.500 0.500l5 5.500 5-5.500"/></svg>
<div class="abs" style='left:1237.4px;top:233px;font-size:10.5px;line-height:13px;color:#1c1a5e;white-space:nowrap;transform-origin:0 50%;transform:scaleX(1.0430);font-family:"Liberation Mono",monospace;'>CONSTRAINTS Y AXIS</div>
<svg class="abs" style="left:1136.500px;top:256px" width="9" height="17" viewBox="0 0 9 17"><path d="M4.500 3v11" stroke="#1e1e22" stroke-width="1.400"/><path d="M4.500 0L0.800 4.500h7.400zM4.500 17L0.800 12.500h7.400z" fill="#1e1e22"/></svg>
<div class="abs inp" style="left:1156px;top:248px;width:200px;height:32px"></div>
<div class="abs" style='left:1167.8px;top:256px;font-size:14.5px;line-height:17px;color:#26262b;white-space:nowrap;transform-origin:0 50%;transform:scaleX(0.9320);'>Top</div>
<svg class="abs" style="left:1334px;top:260.500px" width="11" height="7" viewBox="0 0 11 7" fill="none" stroke="#b8b8b8" stroke-width="1"><path d="M0.500 0.500l5 5.500 5-5.500"/></svg>
<!-- z index -->
<div class="abs" style='left:1027.5px;top:293px;font-size:10.5px;line-height:13px;color:#1c1a5e;white-space:nowrap;transform-origin:0 50%;transform:scaleX(1.0179);font-family:"Liberation Mono",monospace;'>Z INDEX</div>
<div class="abs inp" style="left:1027px;top:308px;width:329px;height:32px"></div>
<div class="abs" style="left:1028px;top:309px;width:39px;height:30px;background:#fafafa;border-right:1px solid #d9d9d9"></div>
<svg class="abs cb" style="left:1040px;top:317.500px" width="14" height="11" viewBox="0 0 14 11" fill="none" stroke="#26262b" stroke-width="1.100"><path d="M4 0.600H3.300a1.300 1.300 0 0 0-1.300 1.300v2.200a1.300 1.300 0 0 1-1.300 1.300 1.300 1.300 0 0 1 1.300 1.300v2.400a1.300 1.300 0 0 0 1.300 1.300H4M10 0.600h0.700a1.300 1.300 0 0 1 1.300 1.300v2.200a1.300 1.300 0 0 0 1.300 1.300 1.300 1.300 0 0 0-1.300 1.300v2.400a1.300 1.300 0 0 1-1.300 1.300H10M4.800 5.500h4.400"/></svg>
<div class="abs" style='left:1077.6px;top:316px;font-size:14.5px;line-height:17px;color:#bfbfbf;white-space:nowrap;transform-origin:0 50%;transform:scaleX(0.9533);'>Z Index</div>
<!-- dimensions -->
<div class="abs plus" style="left:1028px;top:356.500px"></div>
<div class="abs" style='left:1048.2px;top:354px;font-size:14.5px;line-height:17px;color:#26262b;white-space:nowrap;transform-origin:0 50%;transform:scaleX(0.9452);'>Dimensions</div>
<div class="abs" style="left:1027px;top:373.500px;width:329px;height:1px;background:#ececec"></div>
<div class="abs" style='left:1026.9px;top:383px;font-size:10.5px;line-height:13px;color:#1c1a5e;white-space:nowrap;transform-origin:0 50%;transform:scaleX(1.0416);font-family:"Liberation Mono",monospace;'>MODE SELECTOR BY INDEX OR NAME</div>
<div class="abs inp" style="left:1027px;top:398px;width:329px;height:32px"></div>
<div class="abs" style="left:1028px;top:399px;width:39px;height:30px;background:#fafafa;border-right:1px solid #d9d9d9"></div>
<div class="abs" style="left:1316px;top:399px;width:39px;height:30px;background:#fafafa;border-left:1px solid #d9d9d9"></div>
<svg class="abs cb" style="left:1040px;top:407.500px" width="14" height="11" viewBox="0 0 14 11" fill="none" stroke="#26262b" stroke-width="1.100"><path d="M4 0.600H3.300a1.300 1.300 0 0 0-1.300 1.300v2.200a1.300 1.300 0 0 1-1.300 1.300 1.300 1.300 0 0 1 1.300 1.300v2.400a1.300 1.300 0 0 0 1.300 1.300H4M10 0.600h0.700a1.300 1.300 0 0 1 1.300 1.300v2.200a1.300 1.300 0 0 0 1.300 1.300 1.300 1.300 0 0 0-1.300 1.300v2.400a1.300 1.300 0 0 1-1.300 1.300H10M4.800 5.500h4.400"/></svg>
<div class="abs" style='left:1077.9px;top:406px;font-size:14.5px;line-height:17px;color:#bfbfbf;white-space:nowrap;transform-origin:0 50%;transform:scaleX(0.8542);'>0</div>
<div class="abs" style='left:1330px;top:406px;font-size:14.5px;line-height:17px;color:#26262b;white-space:nowrap;transform-origin:0 50%;transform:scaleX(1.0283);font-style:italic;'>fx</div>
<!-- modes -->
<div class="abs" style='left:1026.9px;top:458px;font-size:10.5px;line-height:13px;color:#1c1a5e;white-space:nowrap;transform-origin:0 50%;transform:scaleX(1.0455);font-family:"Liberation Mono",monospace;'>AVAILABLE HTMLBLOCK MODES</div>
<div class="abs" style="left:1027px;top:508px;width:329px;height:1px;background:#ececec"></div>
<div class="abs" style="left:1027px;top:473px;width:109px;height:36px;background:#fff;border:1px solid #ececec;border-bottom:none;border-radius:2px 2px 0 0"></div>
<div class="abs" style="left:1044px;top:480px;width:22px;height:22px;background:#fafafa;border:1px solid #d9d9d9;border-radius:2px"></div>
<div class="abs" style='left:1051.5px;top:484px;font-size:13px;line-height:16px;color:#111;white-space:nowrap;transform-origin:0 50%;transform:scaleX(0.9676);'>0</div>
<div class="abs" style='left:1074.8px;top:484px;font-size:14.5px;line-height:17px;color:#5b2ee5;white-space:nowrap;transform-origin:0 50%;transform:scaleX(0.9640);'>Default</div>
<div class="abs" style="left:1138px;top:473px;width:40px;height:35px;background:#fafafa;border:1px solid #ececec;border-bottom:none;border-radius:2px 2px 0 0"></div>
<svg class="abs" style="left:1152px;top:485px" width="12" height="12" viewBox="0 0 12 12" stroke="#26262b" stroke-width="1.200"><path d="M6 0v12M0 6h12"/></svg>
<!-- classname -->
<div class="abs" style='left:1026.9px;top:528px;font-size:10.5px;line-height:13px;color:#1c1a5e;white-space:nowrap;transform-origin:0 50%;transform:scaleX(1.0418);font-family:"Liberation Mono",monospace;'>HTMLBLOCK CSS CLASSNAME</div>
<div class="abs inp" style="left:1027px;top:543px;width:329px;height:32px"></div>
<div class="abs" style="left:1028px;top:544px;width:39px;height:30px;background:#fafafa;border-right:1px solid #d9d9d9"></div>
<div class="abs" style="left:1316px;top:544px;width:39px;height:30px;background:#fafafa;border-left:1px solid #d9d9d9"></div>
<svg class="abs cb" style="left:1040px;top:552.500px" width="14" height="11" viewBox="0 0 14 11" fill="none" stroke="#26262b" stroke-width="1.100"><path d="M4 0.600H3.300a1.300 1.300 0 0 0-1.300 1.300v2.200a1.300 1.300 0 0 1-1.300 1.300 1.300 1.300 0 0 1 1.300 1.300v2.400a1.300 1.300 0 0 0 1.300 1.300H4M10 0.600h0.700a1.300 1.300 0 0 1 1.300 1.300v2.200a1.300 1.300 0 0 0 1.300 1.300 1.300 1.300 0 0 0-1.300 1.300v2.400a1.300 1.300 0 0 1-1.300 1.300H10M4.800 5.500h4.400"/></svg>
<div class="abs" style='left:1077.9px;top:551px;font-size:14.5px;line-height:17px;color:#26262b;white-space:nowrap;transform-origin:0 50%;transform:scaleX(1.0049);'>htmlblockWidget</div>
<div class="abs" style='left:1330px;top:551px;font-size:14.5px;line-height:17px;color:#26262b;white-space:nowrap;transform-origin:0 50%;transform:scaleX(1.0283);font-style:italic;'>fx</div>
<!-- sections -->
<div class="abs plus" style="left:1033px;top:596px"></div>
<div class="abs" style='left:1055.2px;top:594px;font-size:14.5px;line-height:17px;color:#26262b;white-space:nowrap;transform-origin:0 50%;transform:scaleX(0.9627);'>Content</div>
<div class="abs plus" style="left:1033px;top:620px"></div>
<div class="abs" style='left:1055.2px;top:618px;font-size:14.5px;line-height:17px;color:#26262b;white-space:nowrap;transform-origin:0 50%;transform:scaleX(0.9464);'>Border</div>
<div class="abs plus" style="left:1033px;top:644px"></div>
<div class="abs" style='left:1055.2px;top:642px;font-size:14.5px;line-height:17px;color:#26262b;white-space:nowrap;transform-origin:0 50%;transform:scaleX(0.9331);'>Shadow</div>
<div class="abs plus" style="left:1033px;top:668px"></div>
<div class="abs" style='left:1055.2px;top:666px;font-size:14.5px;line-height:17px;color:#26262b;white-space:nowrap;transform-origin:0 50%;transform:scaleX(0.9127);'>Reflect</div>
<div class="abs plus" style="left:1033px;top:692px"></div>
<div class="abs" style='left:1055.2px;top:690px;font-size:14.5px;line-height:17px;color:#26262b;white-space:nowrap;transform-origin:0 50%;transform:scaleX(0.9484);'>Background</div>
<div class="abs plus" style="left:1033px;top:716px"></div>
<div class="abs" style='left:1055.2px;top:714px;font-size:14.5px;line-height:17px;color:#26262b;white-space:nowrap;transform-origin:0 50%;transform:scaleX(0.9524);'>Actions</div>
<div class="abs plus" style="left:1033px;top:740px"></div>
<div class="abs" style='left:1055.2px;top:738px;font-size:14.5px;line-height:17px;color:#26262b;white-space:nowrap;transform-origin:0 50%;transform:scaleX(0.8978);'>State</div>
<!-- chat bubble -->
<div class="abs" style="left:1300.500px;top:702px;width:56px;height:56px;border-radius:50%;background:#2c3e46"></div>
<svg class="abs" style="left:1317.500px;top:721px" width="22" height="19" viewBox="0 0 22 19"><path d="M3 1h16a2 2 0 0 1 2 2v14.500l-4-3H3a2 2 0 0 1-2-2V3a2 2 0 0 1 2-2z" fill="none" stroke="#fff" stroke-width="2" stroke-linejoin="round"/><path d="M5 6h12M5 10h7" stroke="#fff" stroke-width="2"/></svg>
<!-- red annotation -->
<div class="abs" style="left:1020px;top:160px;width:346px;height:598px;border:3.3px solid #f53d3d;box-shadow:0 1px 7px rgba(0,0,0,.6),inset 0 1px 6px rgba(0,0,0,.55);clip-path:inset(0 -20px -20px -20px)"></div>
</div>
</body>
</html>
